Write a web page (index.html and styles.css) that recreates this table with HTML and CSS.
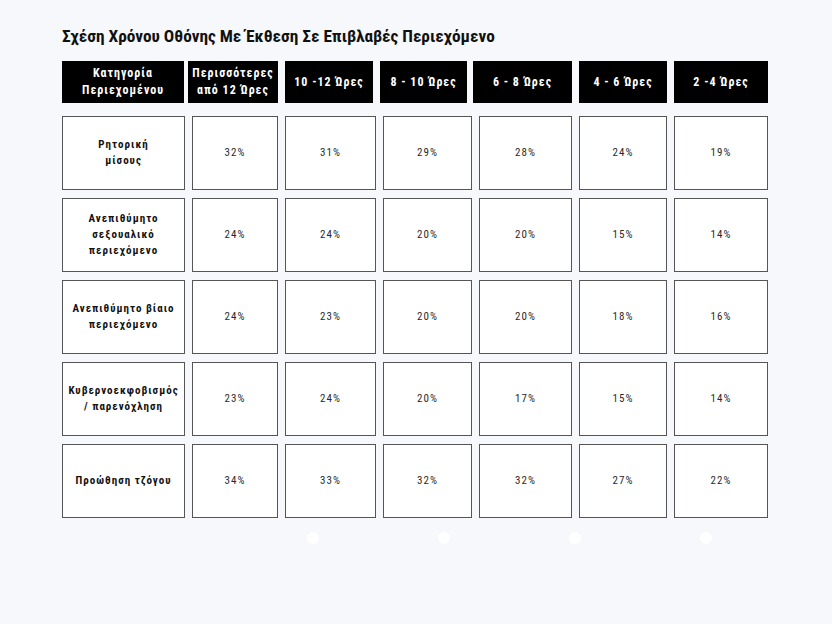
FILE: index.html
```html
<!DOCTYPE html>
<html lang="el">
<head>
<meta charset="utf-8">
<title>Σχέση Χρόνου Οθόνης</title>
<link rel="stylesheet" href="styles.css">
</head>
<body>
<div class="page">
  <h1 class="title">Σχέση Χρόνου Οθόνης Με Έκθεση Σε Επιβλαβές Περιεχόμενο</h1>
  <div class="grid">
    <div class="th c1">Κατηγορία<br>Περιεχομένου</div>
    <div class="th c2">Περισσότερες<br>από 12 Ώρες</div>
    <div class="th c3">10 -12 Ώρες</div>
    <div class="th c4">8 - 10 Ώρες</div>
    <div class="th c5">6 - 8 Ώρες</div>
    <div class="th c6">4 - 6 Ώρες</div>
    <div class="th c7">2 -4 Ώρες</div>

    <div class="td label">Ρητορική<br>μίσους</div>
    <div class="td">32%</div><div class="td">31%</div><div class="td">29%</div><div class="td">28%</div><div class="td">24%</div><div class="td">19%</div>

    <div class="td label">Ανεπιθύμητο<br>σεξουαλικό<br>περιεχόμενο</div>
    <div class="td">24%</div><div class="td">24%</div><div class="td">20%</div><div class="td">20%</div><div class="td">15%</div><div class="td">14%</div>

    <div class="td label">Ανεπιθύμητο βίαιο<br>περιεχόμενο</div>
    <div class="td">24%</div><div class="td">23%</div><div class="td">20%</div><div class="td">20%</div><div class="td">18%</div><div class="td">16%</div>

    <div class="td label">Κυβερνοεκφοβισμός<br>/ παρενόχληση</div>
    <div class="td">23%</div><div class="td">24%</div><div class="td">20%</div><div class="td">17%</div><div class="td">15%</div><div class="td">14%</div>

    <div class="td label">Προώθηση τζόγου</div>
    <div class="td">34%</div><div class="td">33%</div><div class="td">32%</div><div class="td">32%</div><div class="td">27%</div><div class="td">22%</div>
  </div>
  <div class="dots">
    <span class="dot"></span><span class="dot"></span><span class="dot"></span><span class="dot"></span>
  </div>
</div>
</body>
</html>
```
FILE: styles.css
```css
html, body {
  margin: 0;
  padding: 0;
  background: #f7f8fc;
}
.page {
  padding: 24px 0 0 62px;
  font-family: Roboto, "Liberation Sans", sans-serif;
  font-stretch: condensed;
}
.title {
  margin: 0;
  font-size: 17.3px;
  line-height: 24px;
  font-weight: 700;
  color: #111;
  font-stretch: condensed;
}
.grid {
  margin-top: 13px;
  display: grid;
  grid-template-columns: 123px 86px 91px 89px 93px 88px 94px;
  grid-template-rows: 47px repeat(5, 74px);
  column-gap: 7px;
  row-gap: 8px;
  width: 706px;
}
.th {
  background: #000;
  color: #fff;
  font-weight: 700;
  font-size: 12px;
  line-height: 17px;
  letter-spacing: 1px;
  display: flex;
  align-items: center;
  justify-content: center;
  text-align: center;
  margin-bottom: 5px;
}
.th.c1 { margin-right: 1px; }
.th.c2 { margin-left: -4px; }
.th.c3 { margin-right: 3px; }
.th.c4 { margin-left: -3px; margin-right: 5px; }
.th.c5 { margin-left: -6px; }
.td {
  background: #fff;
  border: 1px solid #555;
  box-sizing: border-box;
  display: flex;
  align-items: center;
  justify-content: center;
  text-align: center;
  font-size: 11px;
  line-height: 16px;
  letter-spacing: 1px;
  color: #2a2a2a;
}
.td.label {
  font-weight: 700;
  color: #111;
}
.dots {
  display: flex;
  gap: 119px;
  padding: 14px 0 0 245px;
}
.dot {
  width: 12px;
  height: 12px;
  border-radius: 50%;
  background: #fff;
}
```
